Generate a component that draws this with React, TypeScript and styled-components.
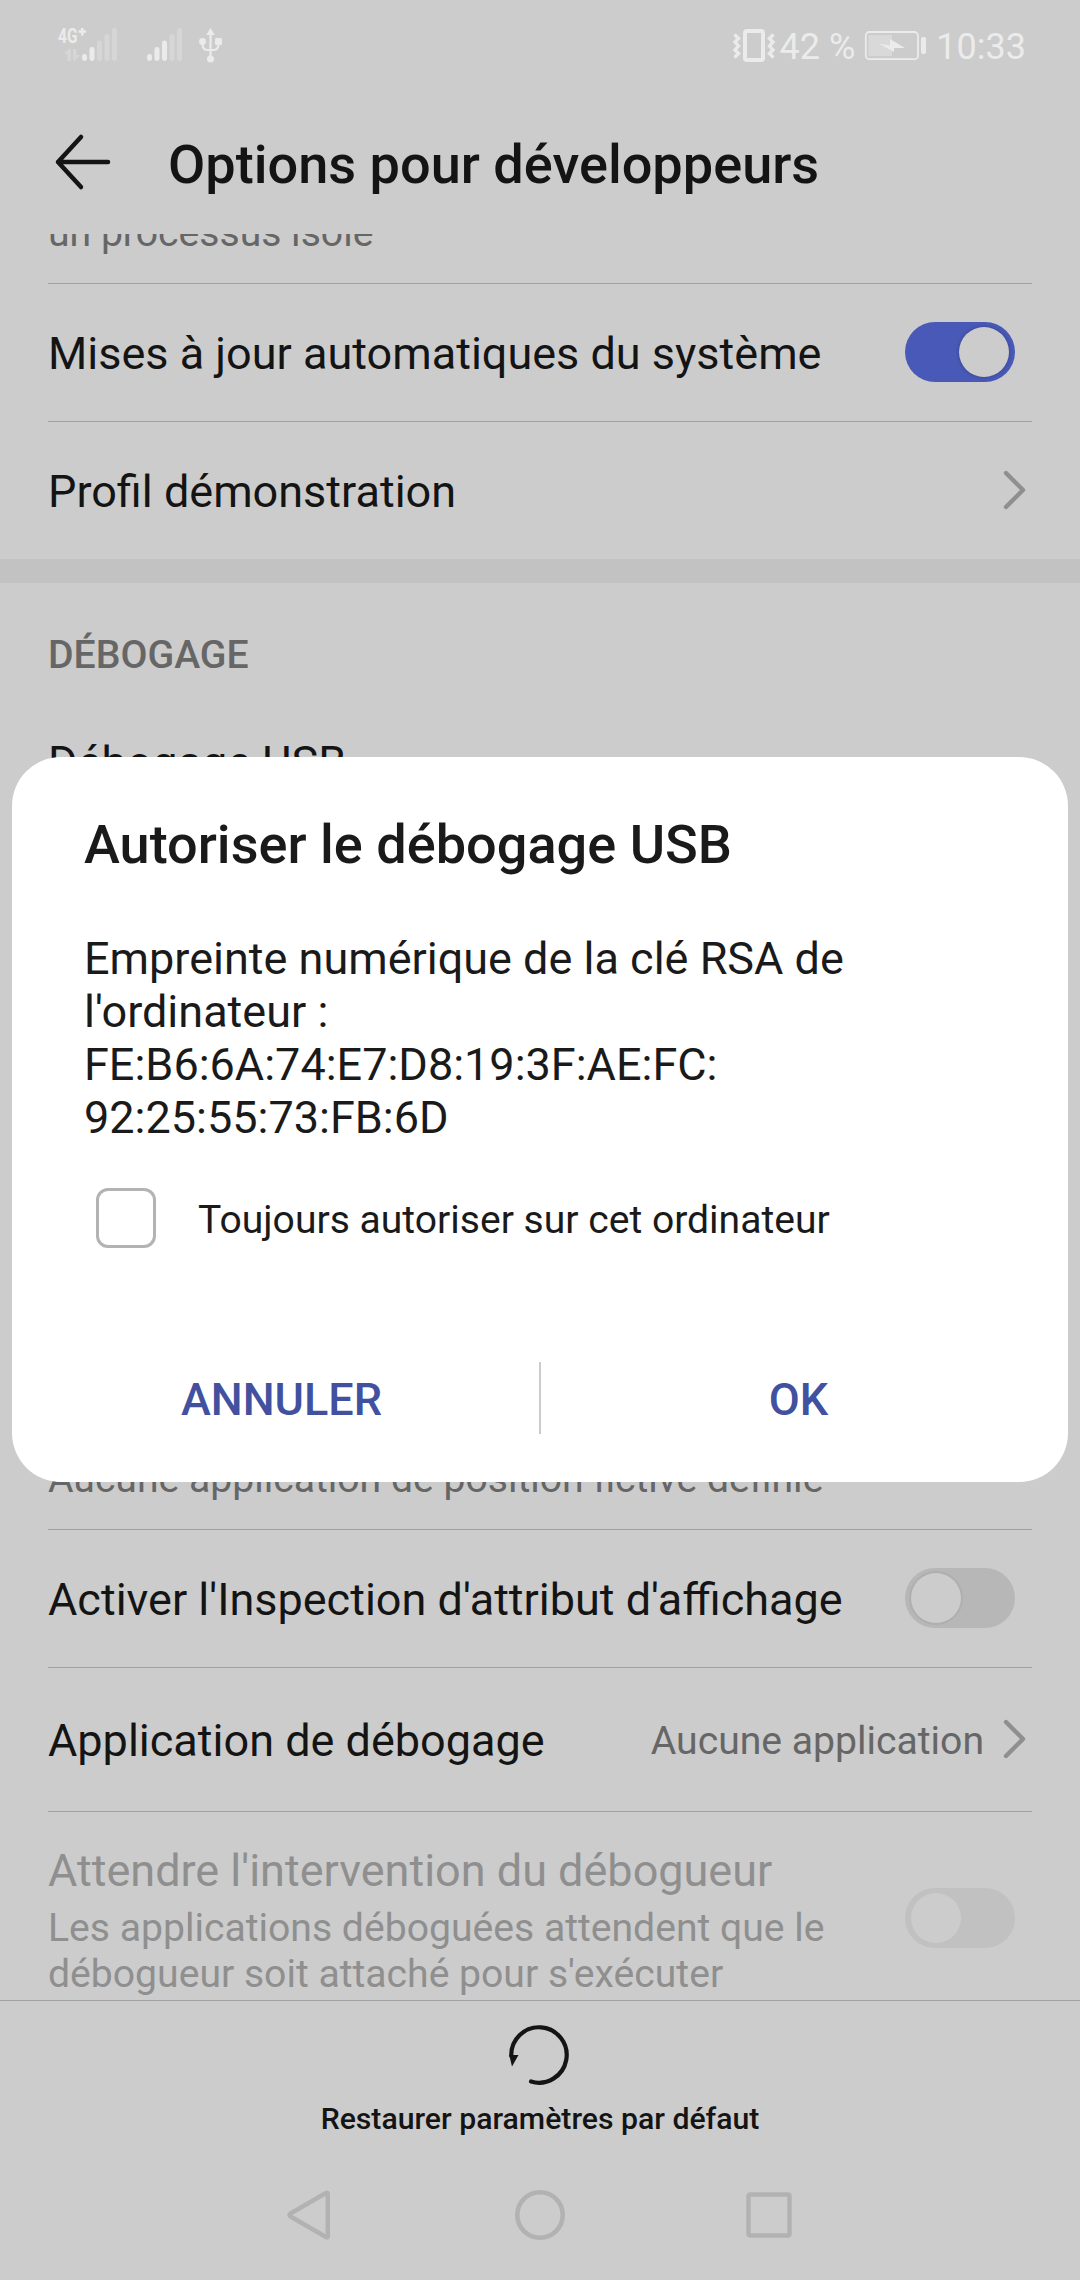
import React from "react";
import styled, { createGlobalStyle } from "styled-components";

const GlobalStyle = createGlobalStyle`
  * { box-sizing: border-box; }
  html, body { margin: 0; padding: 0; background: #cccccc; }
  body { font-family: Roboto, "Noto Sans", sans-serif; color: #141414; }
`;

const Screen = styled.div`
  position: relative;
  width: 1080px;
  height: 2280px;
  overflow: hidden;
  display: flex;
  flex-direction: column;
  background: #cccccc;
`;

const StatusBar = styled.header`
  flex: none;
  height: 90px;
  padding: 0 54px 0 58px;
  display: flex;
  justify-content: space-between;
  align-items: flex-start;
  color: #ebebeb;
`;

const StatusIcons = styled.svg`
  display: block;
  flex: none;
`;

const StatusGroup = styled.div`
  display: flex;
  align-items: center;
  height: 92px;
`;

const StatusText = styled.span<{ $left: number; $right?: number }>`
  font-size: 36px;
  line-height: 44px;
  white-space: pre;
  padding-top: 2px;
  margin-left: ${(p) => p.$left}px;
  margin-right: ${(p) => p.$right ?? 0}px;
`;

const TitleBar = styled.div`
  flex: none;
  height: 144px;
  padding: 0 54px;
  display: flex;
  align-items: center;
`;

const PageTitle = styled.h1`
  margin: 6px 0 0 56px;
  font-size: 54.1px;
  line-height: 64px;
  font-weight: 500;
`;

const List = styled.main`
  flex: none;
  height: 1766px;
  overflow: hidden;
`;

const Row = styled.section<{ $height: number; $last?: boolean }>`
  height: ${(p) => p.$height}px;
  margin: 0 48px;
  display: flex;
  align-items: center;
  justify-content: space-between;
  border-bottom: ${(p) => (p.$last ? "none" : "1px solid #a1a1a1")};
`;

const ClippedRow = styled(Row)`
  align-items: flex-end;
`;

const Label = styled.span<{ $off?: boolean }>`
  display: block;
  padding-top: 2px;
  font-size: 45px;
  line-height: 53px;
  white-space: nowrap;
  color: ${(p) => (p.$off ? "#8f8f8f" : "#141414")};
`;

const Summary = styled.span<{ $off?: boolean; $top?: number; $bottom?: number }>`
  display: block;
  font-size: 39.14px;
  line-height: 46px;
  white-space: nowrap;
  padding-top: ${(p) => p.$top ?? 0}px;
  margin-bottom: ${(p) => p.$bottom ?? 0}px;
  color: ${(p) => (p.$off ? "#8f8f8f" : "#666666")};
`;

const TextStack = styled.div<{ $top: number }>`
  align-self: flex-start;
  padding-top: ${(p) => p.$top}px;
`;

const Trailing = styled.div`
  display: flex;
  align-items: center;
  gap: 19px;
  margin-right: 5px;
`;

const Band = styled.div`
  height: 24px;
  background: #c2c2c2;
`;

const SectionTitle = styled.h2`
  height: 148px;
  margin: 0 48px;
  padding-top: 49px;
  font-size: 39.2px;
  line-height: 46px;
  font-weight: 500;
  color: #666666;
`;

const Track = styled.div<{ $on?: boolean; $off?: boolean }>`
  width: 110px;
  height: 60px;
  margin: 0 17px 1px 0;
  padding: 5px 6px;
  border-radius: 30px;
  display: flex;
  flex: none;
  justify-content: ${(p) => (p.$on ? "flex-end" : "flex-start")};
  background: ${(p) => (p.$on ? "#4859b8" : p.$off ? "#c1c1c1" : "#b7b7b7")};
`;

const Knob = styled.div<{ $shadow: string }>`
  width: 50px;
  height: 50px;
  border-radius: 50%;
  background: #cccccc;
  box-shadow: ${(p) => p.$shadow};
`;

const Footer = styled.footer`
  flex: none;
  height: 144px;
  border-top: 1px solid #a1a1a1;
  display: flex;
  flex-direction: column;
  align-items: center;
  padding-top: 24px;
`;

const ResetIcon = styled.svg`
  margin-right: 2px;
`;

const FooterLabel = styled.span`
  margin-top: 16px;
  font-size: 30.2px;
  line-height: 36px;
  font-weight: 500;
`;

const NavBar = styled.nav`
  flex: none;
  height: 136px;
  padding: 6px 288px 0 286px;
  display: flex;
  justify-content: space-between;
  align-items: center;
`;

const Dialog = styled.div`
  position: absolute;
  left: 12px;
  top: 757px;
  width: 1056px;
  height: 725px;
  border-radius: 49px;
  background: #ffffff;
  color: #1a1a1a;
  padding: 56px 12px 48px;
  display: flex;
  flex-direction: column;
`;

const DialogTitle = styled.h2`
  margin: 0 60px;
  font-size: 54.1px;
  line-height: 64px;
  font-weight: 500;
`;

const DialogText = styled.p`
  margin: 55px 60px 0;
  font-size: 45px;
  line-height: 53px;
`;

const CheckRow = styled.label`
  margin: 44px 72px 0;
  display: flex;
  align-items: center;
  gap: 42px;
  font-size: 39.08px;
  line-height: 46px;
`;

const CheckLabel = styled.span`
  padding-top: 3px;
`;

const CheckBox = styled.span`
  width: 60px;
  height: 60px;
  border: 3px solid #b3b3b3;
  border-radius: 12px;
`;

const Actions = styled.div`
  margin-top: auto;
  height: 72px;
  display: flex;
  align-items: center;
`;

const Action = styled.button`
  flex: 1;
  padding: 3px 0 0;
  border: 0;
  background: none;
  font: 500 45px/53px Roboto, sans-serif;
  color: #41519f;
`;

const Divider = styled.div`
  width: 2px;
  height: 72px;
  background: #cccccc;
`;

const Chevron = () => (
  <svg width="24" height="44" viewBox="0 0 24 44" fill="none">
    <path d="M3 4L20 21L3 38" stroke="#8f8f8f" strokeWidth="4.4" strokeLinecap="round" strokeLinejoin="round" />
  </svg>
);

const Switch = ({ on, off }: { on?: boolean; off?: boolean }) => (
  <Track $on={on} $off={off}>
    <Knob $shadow={off ? "none" : on ? "0 0 4px rgba(0,0,0,0.25)" : "0 0 0 2px #afafaf"} />
  </Track>
);

const Bars = ({ x, lit }: { x: number; lit: number }) => (
  <g>
    {[7, 14, 20.5, 27, 33].map((h, i) => (
      <rect key={h} x={x + i * 7.5} y={61 - h} width="5" height={h} rx="2.4" fill={i < lit ? "#ebebeb" : "#d6d6d6"} />
    ))}
  </g>
);

const SignalIcons = () => (
  <StatusIcons width="172" height="80" viewBox="58 0 172 80">
    <text x="58" y="43" fontFamily="Roboto" fontWeight="700" fontSize="20.5" textLength="19.500" lengthAdjust="spacingAndGlyphs" fill="#ebebeb">4G</text>
    <path d="M78.500 31.500H86M82.200 28V35.500" stroke="#ebebeb" strokeWidth="2.600" />
    <path d="M64 54L69 48.500Q71 48.500 71 51V61H67.500V54ZM73 49H76.500V55H80L75 61Q73 61 73 58Z" fill="#d6d6d6" />
    <Bars x={82} lit={2} />
    <Bars x={147} lit={3} />
    <g fill="#ebebeb" stroke="none">
      <path d="M210.500 28L214.800 35H206.200Z" />
      <circle cx="202.500" cy="41.500" r="3.400" />
      <rect x="215" y="38" width="7" height="7" rx="1.500" />
      <circle cx="210.500" cy="59" r="3.500" />
    </g>
    <path d="M210.500 33V57M202.500 43Q202.500 50 207 50H214Q218.500 50 218.500 43" fill="none" stroke="#ebebeb" strokeWidth="2.200" />
  </StatusIcons>
);

const VibrateIcon = () => (
  <svg width="44" height="36" viewBox="732 28 44 36" fill="none" stroke="#ebebeb">
    <rect x="745" y="31" width="18" height="29" rx="2" strokeWidth="4" />
    <path d="M734.500 34.500L738.500 38.500L735 42L738.500 46L735 50L738.500 53.500L734.500 57.500M773.500 34.500L769.500 38.500L773 42L769.500 46L773 50L769.500 53.500L773.500 57.500" strokeWidth="3.400" />
  </svg>
);

const BatteryIcon = () => (
  <svg width="62" height="30" viewBox="865 31 62 30">
    <rect x="866.800" y="32" width="52.200" height="27.200" rx="3.500" fill="none" stroke="#ebebeb" strokeWidth="1.800" />
    <rect x="869.500" y="35" width="23.500" height="21" fill="#d9d9d9" />
    <rect x="922" y="37" width="5" height="17" rx="2" fill="#ebebeb" />
    <path d="M879.500 43.500L891 45.500V39L906 48H895V52Z" fill="#ebebeb" />
  </svg>
);

export default function App() {
  return (
    <>
      <GlobalStyle />
      <Screen>
        <StatusBar>
          <SignalIcons />
          <StatusGroup>
            <VibrateIcon />
            <StatusText $left={4} $right={9}>42 %</StatusText>
            <BatteryIcon />
            <StatusText $left={10}>10:33</StatusText>
          </StatusGroup>
        </StatusBar>
        <TitleBar>
          <svg width="58" height="60" viewBox="54 132 58 60" fill="none">
            <path d="M81 137L58 162L81 187M58 162H108" stroke="#141414" strokeWidth="4.500" strokeLinecap="round" strokeLinejoin="round" />
          </svg>
          <PageTitle>Options pour développeurs</PageTitle>
        </TitleBar>
        <List>
          <ClippedRow $height={50}>
            <Summary $bottom={27}>un processus isolé</Summary>
          </ClippedRow>
          <Row $height={138}>
            <Label>Mises à jour automatiques du système</Label>
            <Switch on />
          </Row>
          <Row $height={137} $last>
            <Label>Profil démonstration</Label>
            <Trailing>
              <Chevron />
            </Trailing>
          </Row>
          <Band />
          <SectionTitle>DÉBOGAGE</SectionTitle>
          <Row $height={138} $last>
            <TextStack $top={3}>
              <Label>Débogage USB</Label>
            </TextStack>
          </Row>
          <ClippedRow $height={661}>
            <Summary $bottom={27}>Aucune application de position fictive définie</Summary>
          </ClippedRow>
          <Row $height={138}>
            <Label>Activer l'Inspection d'attribut d'affichage</Label>
            <Switch />
          </Row>
          <Row $height={144}>
            <Label>Application de débogage</Label>
            <Trailing>
              <Summary $top={2}>Aucune application</Summary>
              <Chevron />
            </Trailing>
          </Row>
          <Row $height={212} $last>
            <TextStack $top={30}>
              <Label $off>Attendre l'intervention du débogueur</Label>
              <Summary $off $top={8}>
                Les applications déboguées attendent que le
                <br />
                débogueur soit attaché pour s'exécuter
              </Summary>
            </TextStack>
            <Switch off />
          </Row>
        </List>
        <Footer>
          <ResetIcon width="60" height="60" viewBox="509 2025 60 60" fill="none">
            <path d="M511.300 2056A27.700 27.700 0 1 1 531 2081.500" stroke="#141414" strokeWidth="4.200" strokeLinecap="round" />
            <path d="M509.200 2055H518.500L512 2066.500Z" fill="#141414" />
          </ResetIcon>
          <FooterLabel>Restaurer paramètres par défaut</FooterLabel>
        </Footer>
        <NavBar>
          <svg width="48" height="52" viewBox="286 2189 48 52" fill="none" stroke="#b2b2b2" strokeWidth="4.400" strokeLinejoin="round">
            <path d="M326 2193Q327.800 2192 327.800 2194V2236Q327.800 2238 326 2237L290.500 2216.500Q288.500 2215 290.500 2213.500Z" />
          </svg>
          <svg width="52" height="52" viewBox="0 0 52 52" fill="none" stroke="#b2b2b2" strokeWidth="4.600">
            <circle cx="26" cy="26" r="22.700" />
          </svg>
          <svg width="46" height="46" viewBox="0 0 46 46" fill="none" stroke="#b2b2b2" strokeWidth="4.400">
            <rect x="2.500" y="2.500" width="41" height="41" rx="1.500" />
          </svg>
        </NavBar>
        <Dialog role="dialog">
          <DialogTitle>Autoriser le débogage USB</DialogTitle>
          <DialogText>
            Empreinte numérique de la clé RSA de
            <br />
            l'ordinateur :<br />
            FE:B6:6A:74:E7:D8:19:3F:AE:FC:
            <br />
            92:25:55:73:FB:6D
          </DialogText>
          <CheckRow>
            <CheckBox />
            <CheckLabel>Toujours autoriser sur cet ordinateur</CheckLabel>
          </CheckRow>
          <Actions>
            <Action>ANNULER</Action>
            <Divider />
            <Action>OK</Action>
          </Actions>
        </Dialog>
      </Screen>
    </>
  );
}
